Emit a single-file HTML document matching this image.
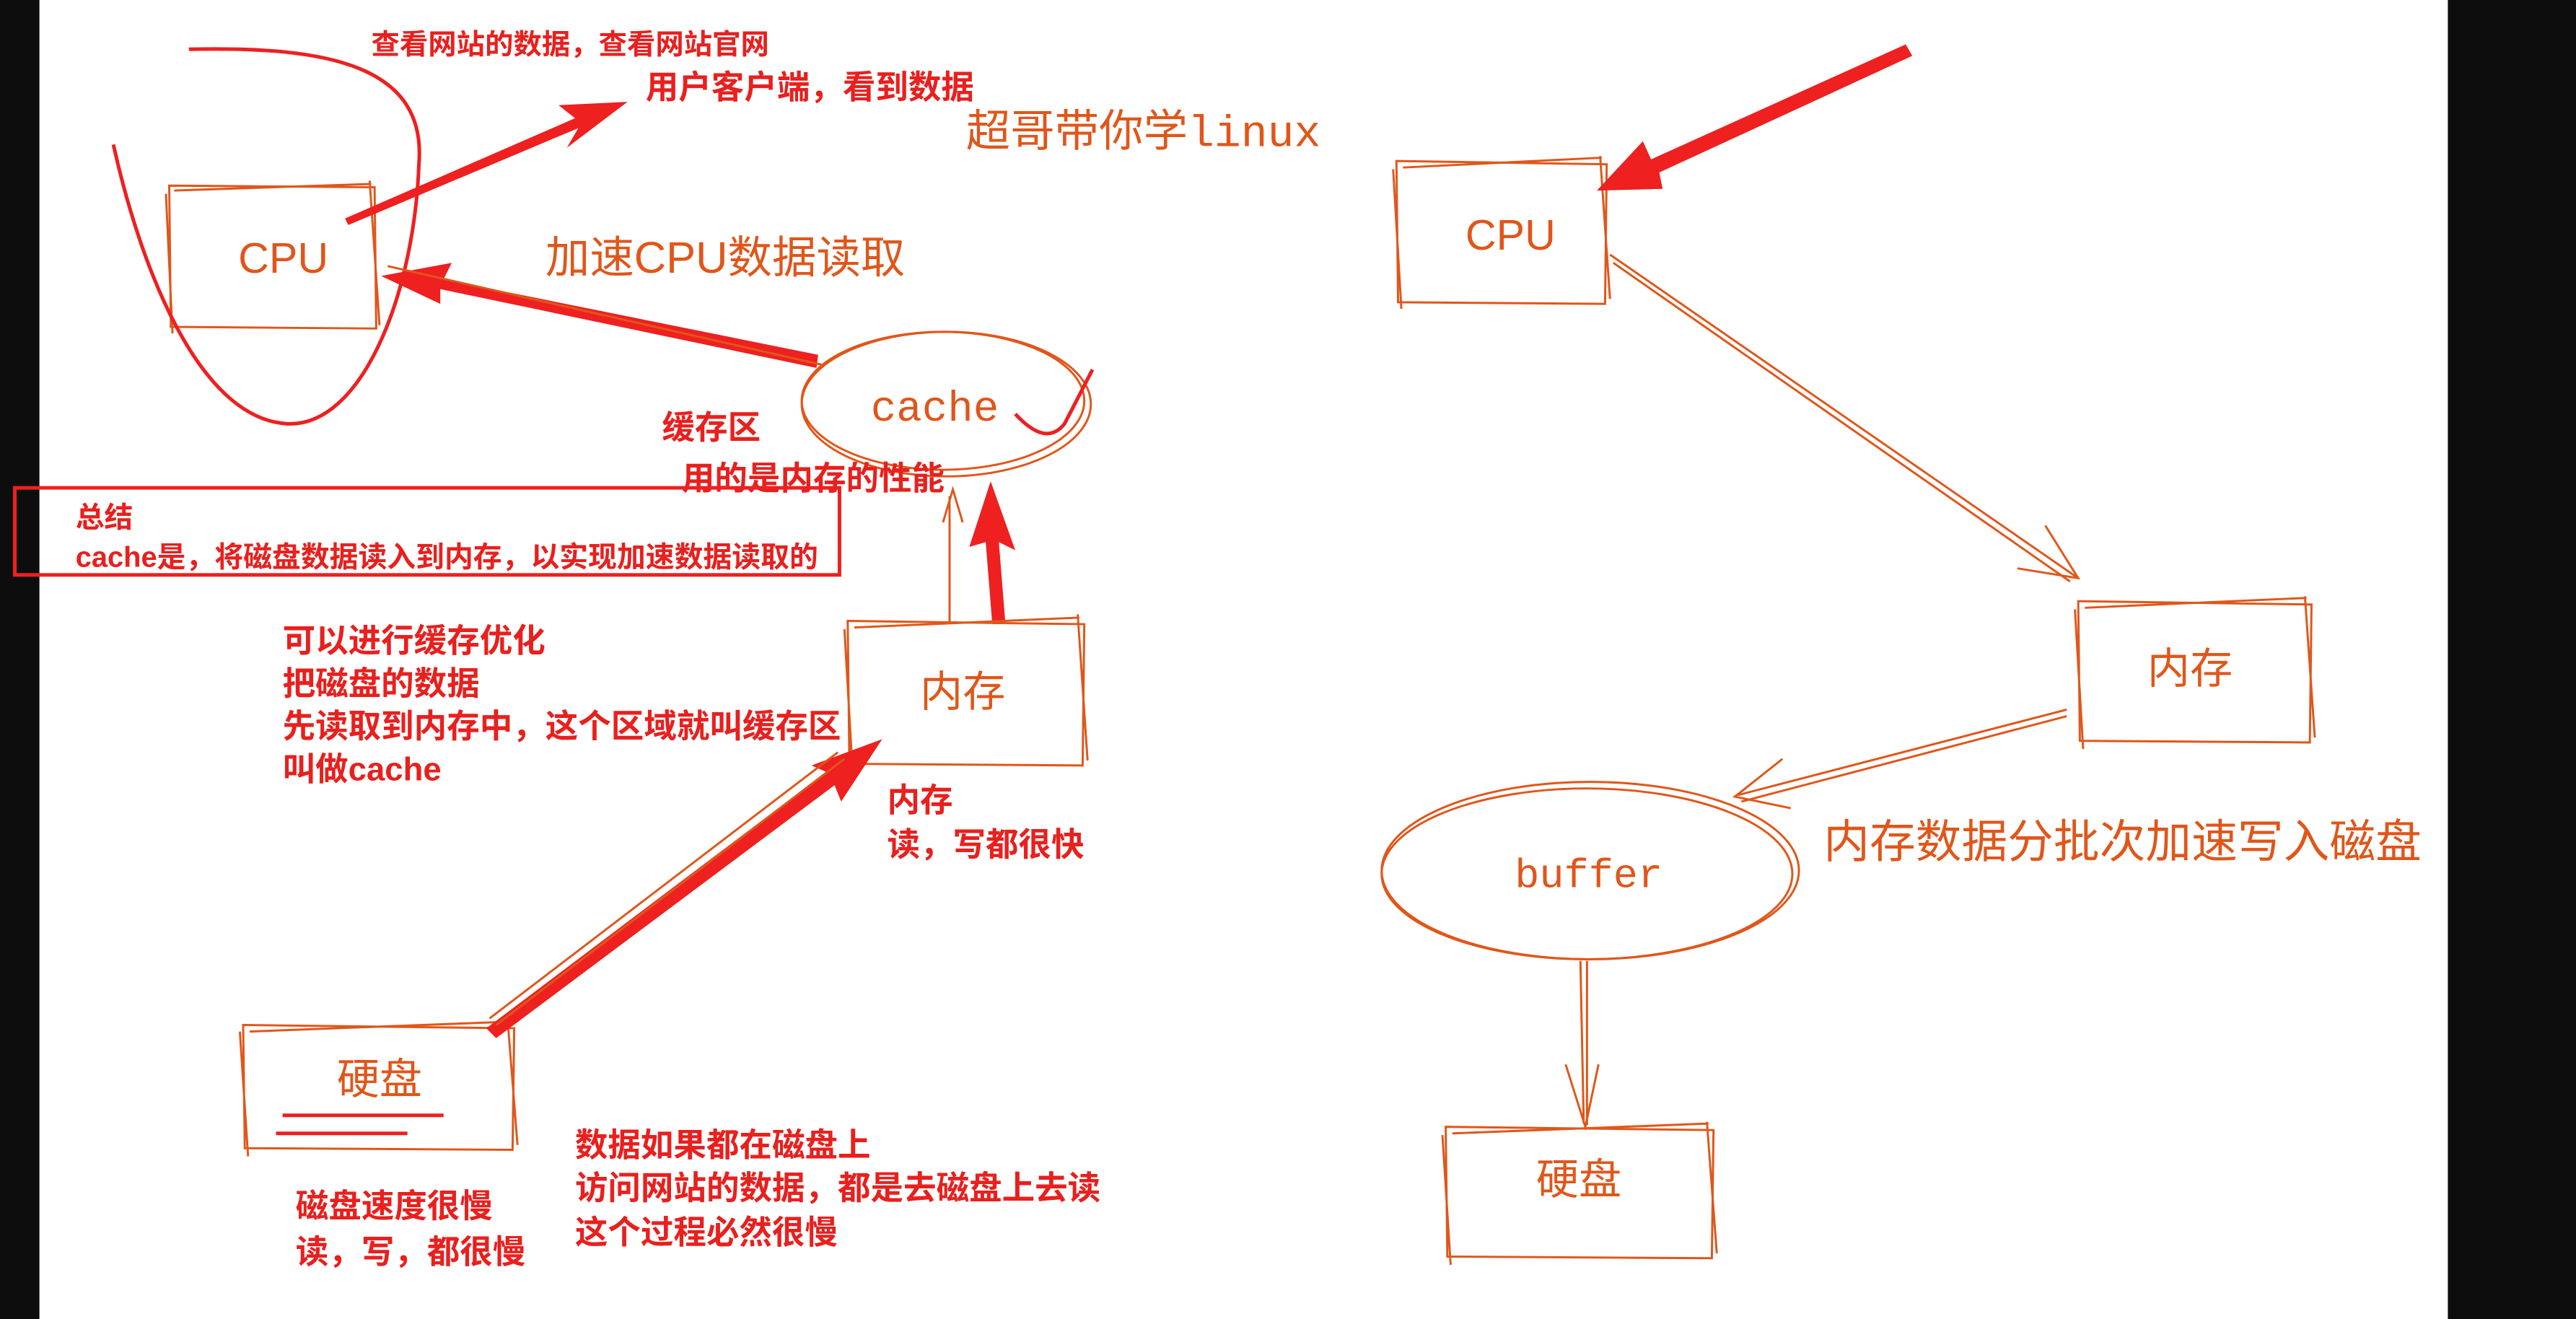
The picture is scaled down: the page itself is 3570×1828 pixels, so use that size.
<!DOCTYPE html>
<html><head><meta charset="utf-8"><style>
html,body{margin:0;padding:0;width:3570px;height:1828px;overflow:hidden;background:#0d0d0d}
svg{display:block}
text{font-family:"Liberation Sans","Noto Sans CJK SC",sans-serif}
.r{fill:#e8201e;font-weight:bold;font-size:20px}
.o{fill:#e0561a;font-size:26px;font-weight:normal}
.sk{fill:none;stroke:#e0561a;stroke-width:1.3}
.rl{fill:none;stroke:#ee2020;stroke-width:2.2}
.ra{fill:#ee2020}
</style></head><body>
<svg width="3570" height="1828" viewBox="0 0 1568 803" preserveAspectRatio="none">
<rect x="0" y="0" width="1568" height="803" fill="#0d0d0d"/>
<rect x="24" y="0" width="1466" height="803" fill="#fff"/>

<text class="r" x="226" y="33" style="font-size:17.3px">查看网站的数据，查看网站官网</text>
<text class="r" x="393" y="60">用户客户端，看到数据</text>
<text x="588" y="89" style="fill:#e0561a;font-size:27px;font-family:'Liberation Mono','Noto Sans CJK SC',monospace">超哥带你学linux</text>

<path class="sk" d="M103 113 L228 114 L229 200 L104 199 Z M106 116 L226 112 M101 118 L105 203 M225 110 L231 198"/>
<text class="o" x="145" y="166">CPU</text>
<path class="rl" d="M115 30 C200 28 260 40 255 100 C252 180 220 260 175 258 C120 255 85 160 69 88"/>
<path class="ra" d="M212 137 L352 78 L345 90 L382 62 L340 64 L350 72 L210 133 Z"/>
<text class="o" x="332" y="166" style="font-size:27px">加速CPU数据读取</text>

<ellipse class="sk" cx="576" cy="246" rx="88" ry="44"/>
<ellipse class="sk" cx="574" cy="244" rx="86" ry="42"/>
<text x="530" y="256" style="fill:#e0561a;font-size:26px;font-family:'Liberation Mono',monospace">cache</text>
<path class="rl" d="M618 252 C630 265 640 268 648 258 L665 225"/>
<path class="ra" d="M498 216 L270 170 L275 160 L232 168 L268 185 L268 176 L497 224 Z"/>
<path class="sk" d="M500 222 L236 162"/>
<text class="r" x="403" y="267">缓存区</text>
<text class="r" x="415" y="298">用的是内存的性能</text>

<rect x="9" y="297" width="502" height="53" fill="none" stroke="#ee2020" stroke-width="2.2"/>
<text class="r" x="46" y="321" style="font-size:17.5px">总结</text>
<text class="r" x="46" y="345" style="font-size:17.5px">cache是，将磁盘数据读入到内存，以实现加速数据读取的</text>

<path class="ra" d="M604 380 L612 380 L608 330 L618 335 L603 293 L590 333 L600 330 Z"/>
<path class="sk" d="M578 380 L578 302 M574 318 L580 298 L586 318"/>

<text class="r" x="172" y="397">可以进行缓存优化</text>
<text class="r" x="172" y="423">把磁盘的数据</text>
<text class="r" x="172" y="449">先读取到内存中，这个区域就叫缓存区</text>
<text class="r" x="172" y="475">叫做cache</text>

<path class="sk" d="M516 378 L660 380 L659 466 L517 465 Z M520 382 L657 376 M514 383 L519 470 M656 374 L662 463"/>
<text class="o" x="560" y="430">内存</text>
<text class="r" x="540" y="494">内存</text>
<text class="r" x="540" y="521">读，写都很快</text>

<path class="sk" d="M148 624 L313 626 L312 700 L149 699 Z M152 628 L310 622 M146 628 L151 704 M309 621 L315 697"/>
<text class="o" x="205" y="666">硬盘</text>
<path class="rl" d="M172 679 L270 679 M168 690 L248 690"/>
<path class="ra" d="M296 626 L302 632 L508 478 L512 488 L537 450 L494 466 L503 470 Z"/>
<path class="sk" d="M298 620 L510 458 M302 624 L514 462"/>

<text class="r" x="180" y="741">磁盘速度很慢</text>
<text class="r" x="180" y="769">读，写，都很慢</text>
<text class="r" x="350" y="704">数据如果都在磁盘上</text>
<text class="r" x="350" y="730">访问网站的数据，都是去磁盘上去读</text>
<text class="r" x="350" y="757">这个过程必然很慢</text>

<path class="sk" d="M850 98 L978 100 L977 185 L851 184 Z M854 102 L975 96 M848 103 L853 188 M974 95 L980 182"/>
<text class="o" x="892" y="152">CPU</text>
<path class="ra" d="M1160 27 L1164 34 L1010 105 L1012 115 L972 116 L1000 86 L1005 97 Z"/>
<path class="sk" d="M980 155 L1265 352 M982 160 L1260 354 M1245 320 L1265 352 L1228 346"/>

<path class="sk" d="M1265 366 L1407 368 L1406 452 L1266 451 Z M1269 370 L1404 364 M1263 371 L1268 456 M1403 363 L1409 449"/>
<text class="o" x="1307" y="416">内存</text>
<path class="sk" d="M1258 432 L1058 484 M1258 436 L1060 488 M1085 462 L1056 485 L1090 492"/>
<text class="o" x="1110" y="522" style="font-size:28px">内存数据分批次加速写入磁盘</text>

<ellipse class="sk" cx="968" cy="530" rx="127" ry="54"/>
<ellipse class="sk" cx="966" cy="532" rx="125" ry="52"/>
<text x="922" y="540" style="fill:#e0561a;font-size:25px;font-family:'Liberation Mono',monospace">buffer</text>
<path class="sk" d="M966 585 L966 685 M962 585 L964 684 M953 648 L965 686 L973 648"/>

<path class="sk" d="M880 686 L1043 688 L1042 766 L881 765 Z M884 690 L1040 684 M878 691 L883 770 M1039 683 L1045 763"/>
<text class="o" x="935" y="727">硬盘</text>
</svg>
</body></html>
